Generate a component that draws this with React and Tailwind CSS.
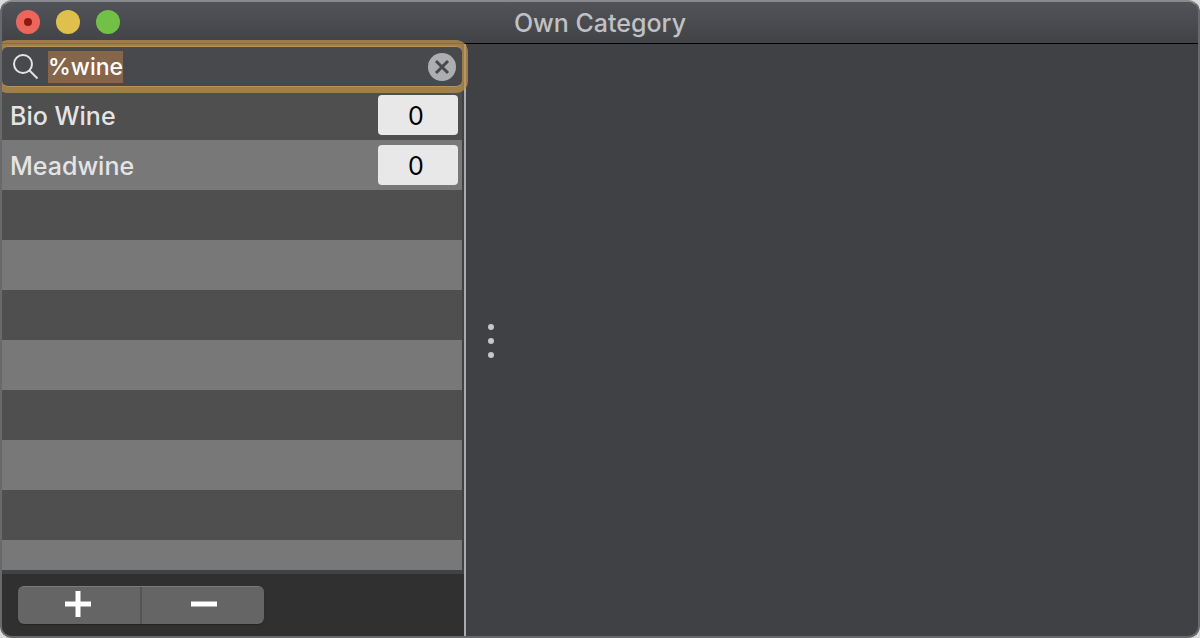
import { useEffect, useRef, useState } from 'react';

const CATEGORIES = [
  { id: 'bio-wine', name: 'Bio Wine', count: 0 },
  { id: 'meadwine', name: 'Meadwine', count: 0 },
];

function TitleBar({ title }) {
  return (
    <header className="relative flex h-[42px] shrink-0 items-center border-b border-black bg-linear-to-b from-[#525358] to-[#424347] px-3.5">
      <div className="flex gap-4 pb-0.5">
        <button type="button" aria-label="Close" className="flex size-6 items-center justify-center rounded-full bg-[#ed665c]">
          <span className="size-2 rounded-full bg-[#8c1a10]" />
        </button>
        <button type="button" aria-label="Minimize" className="size-6 rounded-full bg-[#e0c04c]" />
        <button type="button" aria-label="Zoom" className="size-6 rounded-full bg-[#72c046]" />
      </div>
      <h1 className="pointer-events-none absolute inset-x-0 text-center text-[25px] leading-8 font-medium text-[#c0c1c4]">{title}</h1>
    </header>
  );
}

function SearchField({ value, onChange }) {
  const inputRef = useRef(null);

  useEffect(() => {
    inputRef.current?.focus();
    inputRef.current?.select();
  }, []);

  return (
    <div className="h-[46px] shrink-0 bg-[#4f4f4f] pt-0.5">
      <div className="relative z-10 flex h-[41px] items-center rounded-md border-y border-[#b8925a] bg-[#48494d] pl-[11px] pr-1.5 shadow-[0_0_0_6px_rgba(188,143,73,0.75)]">
        <svg className="size-[26px] shrink-0" viewBox="0 0 26 26" fill="none" stroke="#e3e3e4" strokeWidth="2" aria-hidden="true">
          <circle cx="10" cy="10" r="9" />
          <path d="M16.5 16.5 24.5 24.5" />
        </svg>
        <input
          ref={inputRef}
          type="text"
          aria-label="Search categories"
          value={value}
          onChange={(e) => onChange(e.target.value)}
          className="ml-[9px] h-8 min-w-0 flex-1 bg-transparent text-[23px] leading-8 font-medium text-white outline-none selection:bg-[#86664b] selection:text-white"
        />
        <button type="button" aria-label="Clear search" onClick={() => onChange('')} className="size-7 shrink-0 rounded-full bg-[#adaeb0]">
          <svg viewBox="0 0 28 28" fill="none" stroke="#48494d" strokeWidth="3" aria-hidden="true">
            <path d="M8 8 20 20M20 8 8 20" />
          </svg>
        </button>
      </div>
    </div>
  );
}

function CategoryTable({ categories }) {
  return (
    <div className="min-h-0 flex-1 bg-[repeating-linear-gradient(to_bottom,#4f4f4f_0px_50px,#787878_50px_100px)]">
      <table className="w-full border-collapse">
        <tbody>
          {categories.map(({ id, name, count }) => (
            <tr key={id} className="h-[50px]">
              <th scope="row" className="p-0 pt-0.5 pl-2 text-left text-[25px] leading-8 font-medium text-[#e4e4e4]">
                <label htmlFor={id}>{name}</label>
              </th>
              <td className="w-[84px] p-0">
                <input
                  id={id}
                  type="text"
                  inputMode="numeric"
                  defaultValue={count}
                  className="block h-10 w-20 rounded bg-[#e8e8e8] pt-0.5 pr-1 text-center text-[25px] leading-8 text-black outline-none"
                />
              </td>
            </tr>
          ))}
        </tbody>
      </table>
    </div>
  );
}

function Toolbar() {
  return (
    <footer className="h-[66px] shrink-0 border-t-4 border-[#414244] bg-[#303030] px-4 py-3">
      <div className="flex h-[38px] w-[246px] overflow-hidden rounded-md border-t border-[#7b7b7b] bg-[#656565] shadow-[0_1px_1px_#252525]">
        <button type="button" aria-label="Add category" className="flex w-[124px] justify-center border-r-2 border-[#545454] pr-0.5">
          <svg className="mt-1 size-[26px]" viewBox="0 0 26 26" stroke="#fff" strokeWidth="5" aria-hidden="true">
            <path d="M13 0V26M0 13H26" />
          </svg>
        </button>
        <button type="button" aria-label="Remove category" className="flex flex-1 justify-center pl-0.5">
          <svg className="mt-1 size-[26px]" viewBox="0 0 26 26" stroke="#fff" strokeWidth="5" aria-hidden="true">
            <path d="M0 13H26" />
          </svg>
        </button>
      </div>
    </footer>
  );
}

export default function App() {
  const [query, setQuery] = useState('%wine');

  return (
    <div className="min-h-screen bg-[#dcdcdc] font-['Inter',sans-serif]">
      <div className="flex min-h-screen flex-col overflow-hidden rounded-xl border-2 border-[#68696b] border-t-[#88898d] bg-[#404145]">
        <TitleBar title="Own Category" />
        <div className="flex flex-1">
          <aside className="flex w-[464px] shrink-0 flex-col border-r-2 border-[#ababac] bg-[#414244]">
            <div className="flex flex-1 flex-col pr-0.5">
              <SearchField value={query} onChange={setQuery} />
              <CategoryTable categories={CATEGORIES} />
            </div>
            <Toolbar />
          </aside>
          <main className="flex flex-1 items-center px-[22px] pt-0.5">
            <button type="button" aria-label="Resize sidebar" className="flex cursor-col-resize flex-col gap-2">
              <span className="size-1.5 rounded-full bg-[#c6c7c8]" />
              <span className="size-1.5 rounded-full bg-[#c6c7c8]" />
              <span className="size-1.5 rounded-full bg-[#c6c7c8]" />
            </button>
          </main>
        </div>
      </div>
    </div>
  );
}
